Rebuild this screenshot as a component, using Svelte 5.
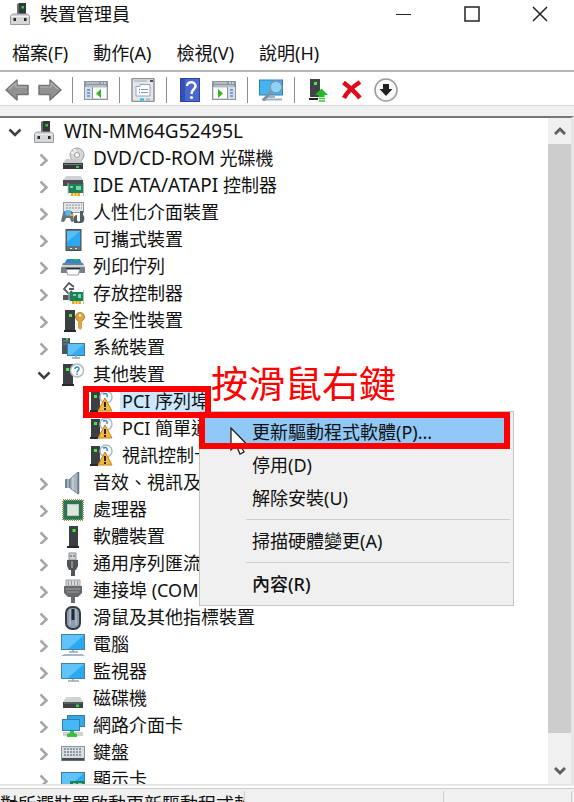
<script>
  const menus = ['檔案(F)', '動作(A)', '檢視(V)', '說明(H)'];

  const toolGroups = [
    [
      { icon: 'back', label: '上一頁' },
      { icon: 'forward', label: '下一頁' },
    ],
    [{ icon: 'panel-left', label: '顯示/隱藏主控台樹狀目錄' }],
    [{ icon: 'properties', label: '內容' }],
    [
      { icon: 'help', label: '說明' },
      { icon: 'panel-right', label: '顯示/隱藏執行窗格' },
    ],
    [{ icon: 'scan', label: '掃描硬體變更' }],
    [
      { icon: 'update', label: '更新驅動程式軟體' },
      { icon: 'remove', label: '解除安裝' },
      { icon: 'disable', label: '停用' },
    ],
  ];

  // lead is the Latin part of a device name, set slightly larger than the rest
  const devices = [
    { level: 0, icon: 'server', lead: 'WIN-MM64G52495L', open: true },
    { level: 1, icon: 'dvd', lead: 'DVD/CD-ROM', name: '光碟機' },
    { level: 1, icon: 'ide', lead: 'IDE ATA/ATAPI', name: '控制器' },
    { level: 1, icon: 'hid', name: '人性化介面裝置' },
    { level: 1, icon: 'portable', name: '可攜式裝置' },
    { level: 1, icon: 'printer', name: '列印佇列' },
    { level: 1, icon: 'storage', name: '存放控制器' },
    { level: 1, icon: 'security', name: '安全性裝置' },
    { level: 1, icon: 'system', name: '系統裝置' },
    { level: 1, icon: 'other', name: '其他裝置', open: true },
    { level: 2, icon: 'warning', name: 'PCI 序列埠', selected: true },
    { level: 2, icon: 'warning', name: 'PCI 簡單通訊控制器' },
    { level: 2, icon: 'warning', name: '視訊控制卡' },
    { level: 1, icon: 'sound', name: '音效、視訊及遊戲控制器' },
    { level: 1, icon: 'cpu', name: '處理器' },
    { level: 1, icon: 'software', name: '軟體裝置' },
    { level: 1, icon: 'usb', name: '通用序列匯流排控制器' },
    { level: 1, icon: 'port', name: '連接埠 (COM 和 LPT)' },
    { level: 1, icon: 'mouse', name: '滑鼠及其他指標裝置' },
    { level: 1, icon: 'computer', name: '電腦' },
    { level: 1, icon: 'monitor', name: '監視器' },
    { level: 1, icon: 'disk', name: '磁碟機' },
    { level: 1, icon: 'network', name: '網路介面卡' },
    { level: 1, icon: 'keyboard', name: '鍵盤' },
    { level: 1, icon: 'display', name: '顯示卡' },
  ];

  const contextGroups = [
    ['更新驅動程式軟體(P)...', '停用(D)', '解除安裝(U)'],
    ['掃描硬體變更(A)'],
    ['內容(R)'],
  ];
</script>

{#snippet icon(name)}
  <svg class="icon" width="24" height="24" viewBox="0 0 24 24" fill="none" aria-hidden="true">
    {#if name === 'back' || name === 'forward'}
      <path
        d={name === 'back'
          ? 'M1 12L12 2V7.500H23V16.500H12V22Z'
          : 'M23 12L12 2V7.500H1V16.500H12V22Z'}
        fill="#929292" stroke="#747474" stroke-width="1.500" stroke-linejoin="round"
      />
      <path d={name === 'back' ? 'M3.500 11.500L11 5V9H22' : 'M20.500 11.500L13 5V9H2'} stroke="#b4b4b4" stroke-width="1.200" />
    {:else if name === 'panel-left' || name === 'panel-right'}
      <rect x=".5" y="3.500" width="23" height="18" fill="#d9dde1" stroke="#8c96a2" />
      <path d="M0 3H24V9H0Z" fill="#8c96a2" />
      <path d="M2 5H15M2 8H22" stroke="#dfe4ea" />
      <path d="M17 5H19M20 5H22" stroke="#fff" />
      {#if name === 'panel-left'}
        <path d="M9 10H22V20H9Z" fill="#fff" />
        <path d="M8.500 9V21" stroke="#8c96a2" />
        <path d="M3 12H6M3 15H6M3 18H6" stroke="#4e8edb" stroke-width="1.500" />
        <path d="M12 15.500L17 11V20Z" fill="#36b51f" />
      {:else}
        <path d="M2 10H15V20H2Z" fill="#fff" />
        <path d="M15.500 9V21" stroke="#8c96a2" />
        <path d="M18 12H21M18 15H21M18 18H21" stroke="#4e8edb" stroke-width="1.500" />
        <path d="M11 15.500L6 11V20Z" fill="#36b51f" />
      {/if}
    {:else if name === 'properties'}
      <rect x="1" y=".5" width="22" height="23" rx="1" fill="#e4e7ea" stroke="#8b9299" stroke-width="1.500" />
      <path d="M3 3H16" stroke="#9ba7b2" />
      <path d="M19 2H22V4H19Z" fill="#4d5359" />
      <path d="M5 8.500H9V6.500H19V18H5Z" fill="#fff" stroke="#9aa6b2" />
      <path d="M8 11.500H9M8 14.500H9" stroke="#248fdd" stroke-width="1.500" />
      <path d="M10 11.500H17M10 14.500H17" stroke="#8b9299" />
      <path d="M9 21.500H13" stroke="#18bdf0" stroke-width="2" />
      <path d="M15 21.500H19" stroke="#aeb8c0" stroke-width="2" />
    {:else if name === 'help'}
      <rect x="2.500" y=".5" width="19" height="23" fill="#4a67cf" stroke="#2746a8" />
      <path d="M3 1H7V23H3Z" fill="#3450b4" />
      <path d="M9 8C9 2.800 17.500 3 17.500 8C17.500 11 13.500 11.500 13.500 16" stroke="#fff" stroke-width="2.500" />
      <circle cx="13.500" cy="19.500" r="1.600" fill="#fff" />
    {:else if name === 'scan'}
      <rect x=".5" y="2" width="23" height="15" fill="#46b4ee" stroke="#2b7fb5" />
      <path d="M8 17H16V20H8Z" fill="#9fb4c4" />
      <path d="M3 21.500H23" stroke="#9db0bf" stroke-width="2" />
      <path d="M12 14L5 21.500" stroke="#7b93a6" stroke-width="3" stroke-linecap="round" />
      <circle cx="17" cy="9" r="6" fill="#8fd2f8" stroke="#7898ad" stroke-width="1.500" />
    {:else if name === 'update'}
      <path d="M4 1H14V19H4Z" fill="#3f4347" />
      <path d="M3 21H12" stroke="#222" stroke-width="2" />
      <path d="M8 4H11V7H8Z" fill="#48f03a" />
      <path d="M9 17L15.500 10.500L22 17H18.500V19H12.500V17Z" fill="#27b72c" />
      <path d="M13 20.500H19M13 23H19" stroke="#3cc83d" stroke-width="1.500" />
    {:else if name === 'remove'}
      <path d="M3.500 4.500C8 8 15 14 20 20M20 4C14 8 7 14 4 20" stroke="#e00b19" stroke-width="4.500" />
    {:else if name === 'disable'}
      <circle cx="12" cy="12" r="11" fill="#fafafa" stroke="#9b9b9b" stroke-width="1.500" />
      <path d="M9 6H15V11H18.500L12 18L5.500 11H9Z" fill="#222" />
    {:else if name === 'server'}
      <path d="M11 1H18V14H11Z" fill="#34383b" />
      <path d="M9 2L11 1V14H9Z" fill="#686c70" />
      <path d="M13.500 4H16V6.500H13.500Z" fill="#25d62b" />
      <path d="M4.500 12H19.500L21.500 14V22.500H2.500V14Z" fill="#d4d6d8" stroke="#999da1" />
      <path d="M3 14.500H21" stroke="#efefef" />
      <path d="M5.500 16H8V19H5.500ZM16 16H18.500V19H16Z" fill="#2b2b2b" />
    {:else if name === 'dvd'}
      <circle cx="16" cy="8" r="7" fill="#d5d7d9" stroke="#9da0a3" />
      <path d="M16 8L10 5M16 8L13 2" stroke="#f7f7f7" stroke-width="1.500" />
      <circle cx="16" cy="8" r="2.500" fill="#fff" stroke="#999" />
      <path d="M5 12H19L22 16H2Z" fill="#c7c9cb" />
      <path d="M2 16H22V22H2Z" fill="#34383b" />
      <path d="M3 17.500H21" stroke="#777" />
      <path d="M15 19H18V21H15Z" fill="#2adb31" />
    {:else if name === 'ide'}
      <path d="M5 2H20L22 6H2Z" fill="#d1d3d5" />
      <path d="M2 6H22V12H2Z" fill="#4a4e52" />
      <path d="M7 10H22V19H7Z" fill="#198258" />
      <path d="M9 12H12V14H9ZM15 12H20V16H15Z" fill="#7fd1a5" />
      <path d="M7 9V20M22.500 9V22" stroke="#b9c1bd" />
      <path d="M10 19H19V22H10Z" fill="#eda51d" />
      <path d="M13 19V22M16 19V22" stroke="#fff2b8" />
    {:else if name === 'hid'}
      <rect x="2.500" y="1.500" width="20" height="10" fill="#e3e5e7" stroke="#979ca1" />
      <path d="M5 4H21M5 7H21" stroke="#8d9398" stroke-dasharray="2 1" />
      <path d="M2 12Q3 9 7 10Q11 9 12 12L13 20Q10 23 9 17H5Q3 23 0 20Z" fill="#68737d" />
      <circle cx="7" cy="12" r="3" fill="#49bbf3" />
      <path d="M9 13H12V15H9Z" fill="#f6a12c" />
      <path d="M13 22V17Q13 14 16 14V19Q17 22 19 20V10H22V14Q24 15 23 20L21 22Z" fill="#515b64" />
    {:else if name === 'portable'}
      <rect x="5" y="1.500" width="15" height="21" fill="#667079" stroke="#47505a" />
      <path d="M6 3H19V18H6Z" fill="#2ba9f6" />
      <path d="M6 3H19L6 14Z" fill="#59bff9" />
      <path d="M9 20.500H11M14 20.500H16" stroke="#dce4e9" />
    {:else if name === 'printer'}
      <path d="M6 4H19L21 9H3Z" fill="#2389da" />
      <path d="M13 4H17V6H13Z" fill="#29ba49" />
      <path d="M2 8H22L24 13V18H0V13Z" fill="#788087" />
      <path d="M1 11H23" stroke="#cfd3d6" stroke-width="2" />
      <path d="M5 13H19V16H5Z" fill="#252a2e" />
      <path d="M5.500 14.500H18.500L17.500 20H6.500Z" fill="#fff" stroke="#9aa1a6" />
    {:else if name === 'storage'}
      <path d="M13 5L8 1L3 7L8 12L11 9M8 7H13" stroke="#555b60" stroke-width="1.800" />
      <path d="M2 13H12V18H2Z" fill="#53585d" />
      <path d="M9 10H22V19H9Z" fill="#198258" />
      <path d="M12 12H15V14H12ZM17 12H20V16H17Z" fill="#83d1a7" />
      <path d="M8 10V20M22.500 8V22" stroke="#b9c1bd" />
      <path d="M11 19H20V22H11Z" fill="#eda51d" />
      <path d="M14 19V22M17 19V22" stroke="#fff2b8" />
    {:else if name === 'security' || name === 'software'}
      <path d={name === 'security' ? 'M4 1H14V21H4Z' : 'M8 1H17V21H8Z'} fill="#3b3f43" />
      <path d={name === 'security' ? 'M3 22H15' : 'M6 22H18'} stroke="#24282a" stroke-width="2" />
      <path d={name === 'security' ? 'M8 5H11V8H8Z' : 'M11.500 4H14.500V7H11.500Z'} fill="#48e93c" />
      {#if name === 'security'}
        <circle cx="19" cy="8" r="4.500" fill="#d9a542" stroke="#b88730" />
        <path d="M17 11H21V19L19.500 21L17 19Z" fill="#d9a542" />
        <circle cx="19" cy="6.500" r="1.200" fill="#fff5d2" />
      {/if}
    {:else if name === 'system'}
      <path d="M1 2H9V18H1Z" fill="#4b555d" />
      <path d="M2 5H8M2 8H8" stroke="#7d8991" />
      <path d="M5 2H7V4H5Z" fill="#35cf52" />
      <rect x="6.500" y="7.500" width="17" height="12" fill="#36acf2" stroke="#397da5" />
      <path d="M7 8H23L10 19H7Z" fill="#61c2fa" />
      <path d="M15 19V22M11 22H19" stroke="#90a6b5" stroke-width="1.500" />
    {:else if name === 'other'}
      <path d="M2 1H12V21H2Z" fill="#3b3f43" />
      <path d="M1 22H13" stroke="#25292b" stroke-width="2" />
      <path d="M5 5H8V8H5Z" fill="#48e93c" />
      <circle cx="16" cy="7.500" r="6.500" fill="#fff" stroke="#b3b9bd" stroke-width="1.500" />
      <path d="M14 6C14 3 18.500 3.500 18 6C18 7.500 16 7.500 16 9.500M16 10.500V12" stroke="#298bc2" stroke-width="1.500" />
    {:else if name === 'warning'}
      <path d="M1 2H10V20H1Z" fill="#3b3f43" />
      <path d="M0 21H8" stroke="#25292b" stroke-width="2" />
      <path d="M4 5H7V8H4Z" fill="#48e93c" />
      <circle cx="16" cy="7" r="6" fill="#f7fbff" stroke="#b3b9bd" stroke-width="1.500" />
      <path d="M13 4Q18 2 17 7" stroke="#298bc2" stroke-width="1.500" />
      <path d="M15 8L22 21H8Z" fill="#f6b940" stroke="#c48416" stroke-linejoin="round" />
      <path d="M15 12V17M15 18V20" stroke="#272015" stroke-width="2" />
    {:else if name === 'sound'}
      <path d="M4 8H9V17H4Z" fill="#718697" />
      <path d="M9 8L17 1V23L9 17Z" fill="#a9b4bc" stroke="#748490" />
      <path d="M7 8V17M12 6V19" stroke="#d6dee3" />
      <path d="M17.500 1V23" stroke="#667580" stroke-width="1.500" />
    {:else if name === 'cpu'}
      <rect x="2" y="2" width="20" height="20" fill="#2a7455" stroke="#9b9c58" stroke-width="2" stroke-dasharray="1 1" />
      <rect x="3" y="3" width="18" height="18" fill="#2a7455" />
      <rect x="6.500" y="6.500" width="11" height="11" fill="#e0e4df" stroke="#b9c9bf" />
    {:else if name === 'usb'}
      <path d="M8 1H15V8H8Z" fill="#d2d4d5" stroke="#858a8e" />
      <path d="M10 3V5M13 3V5" stroke="#444" />
      <path d="M6 8H17V14L15 18H14V24H10V18H8L6 14Z" fill="#515558" />
      <path d="M11 9V16" stroke="#858a8e" stroke-width="2" />
    {:else if name === 'port'}
      <path d="M5 1H19V7H5Z" fill="#d9dbdc" stroke="#9b9fa2" />
      <path d="M7 3H18M7 5H18" stroke="#505355" stroke-dasharray="1 2" />
      <path d="M3 7H21V14L17 18H14V24H10V18H7L3 14Z" fill="#65696c" />
      <path d="M5 10H19M6 13H18" stroke="#a2a5a7" />
    {:else if name === 'mouse'}
      <rect x="5" y="1" width="14" height="22" rx="6" fill="#899bac" stroke="#343c44" stroke-width="2" />
      <path d="M9 3V19M15 3V19" stroke="#c0cbd4" />
      <path d="M12 3V14" stroke="#222b33" stroke-width="3" />
    {:else if name === 'computer' || name === 'monitor'}
      <rect x=".5" y={name === 'computer' ? 1.5 : 3.5} width="23" height="15" fill="#2aa8f2" stroke="#44819f" />
      <path d={name === 'computer' ? 'M1 2H23L7 16H1Z' : 'M1 4H23L7 18H1Z'} fill="#61c3fa" />
      <path d={name === 'computer' ? 'M12 17V19M8 19H17' : 'M12 19V21M7 21H18'} stroke="#93a9b7" stroke-width="1.500" />
      {#if name === 'computer'}
        <path d="M3 21H21L24 23H0Z" fill="#a3b7c6" />
      {/if}
    {:else if name === 'disk'}
      <path d="M5 10H19L22 15H2Z" fill="#d0d2d3" />
      <path d="M2 15H22V21H2Z" fill="#3d4144" />
      <path d="M3 16H21" stroke="#73787b" />
      <path d="M15 17.500H18V20H15Z" fill="#2bd839" />
    {:else if name === 'network'}
      <rect x="6.500" y="1.500" width="17" height="11" fill="#33a9ec" stroke="#387da3" />
      <rect x="1.500" y="5.500" width="17" height="11" fill="#45b8f6" stroke="#387da3" />
      <path d="M2 20H22" stroke="#cdd2d4" stroke-width="4" />
      <path d="M9 17H13V19L16 20V23H6V20L9 19Z" fill="#37bf42" />
    {:else if name === 'keyboard'}
      <rect x=".5" y="5.500" width="23" height="14" fill="#d8dde1" stroke="#89939b" />
      <path d="M3 8H21M3 11H21M3 14H21" stroke="#79838b" stroke-width="1.500" stroke-dasharray="2 1" />
      <path d="M1 17H23V19.500H1Z" fill="#454d54" />
    {:else if name === 'display'}
      <rect x=".5" y="4.500" width="23" height="15" fill="#2fa9ed" stroke="#3d7c9f" />
      <path d="M1 5H23L7 19H1Z" fill="#5fc2f8" />
      <path d="M9 13H23V20H9Z" fill="#198258" />
      <path d="M12 15H15V17H12ZM17 15H21V19H17Z" fill="#8ad1a8" />
    {/if}
  </svg>
{/snippet}

<div class="window">
  <header class="titlebar">
    {@render icon('server')}
    <h1>裝置管理員</h1>
    <div class="window-buttons">
      <button aria-label="最小化">
        <svg width="16" height="16" viewBox="0 0 16 16"><path d="M0 8.500H15" stroke="#222" /></svg>
      </button>
      <button aria-label="最大化">
        <svg width="16" height="16" viewBox="0 0 16 16" fill="none"><rect x="1" y="1" width="14" height="14" stroke="#222" stroke-width="1.500" /></svg>
      </button>
      <button aria-label="關閉">
        <svg width="16" height="16" viewBox="0 0 16 16"><path d="M1 1L15 15M15 1L1 15" stroke="#222" stroke-width="1.500" /></svg>
      </button>
    </div>
  </header>

  <nav class="menubar">
    {#each menus as menu (menu)}
      <button>{menu}</button>
    {/each}
  </nav>

  <div class="toolbar" role="toolbar" aria-label="工具列">
    {#each toolGroups as group, i (i)}
      <div class="tool-group">
        {#each group as tool (tool.icon)}
          <button aria-label={tool.label}>{@render icon(tool.icon)}</button>
        {/each}
      </div>
    {/each}
  </div>

  <main class="content">
    <ul class="tree" role="tree">
      {#each devices as device, i (i)}
        <li
          class="row level-{device.level}"
          role="treeitem"
          aria-level={device.level + 1}
          aria-selected={!!device.selected}
        >
          {#if device.level < 2}
            <button class="toggle" class:open={device.open} aria-label={device.open ? '摺疊' : '展開'}>
              <svg width="14" height="14" viewBox="0 0 14 14" fill="none">
                <path d={device.open ? 'M1.500 4.500L7 10L12.500 4.500' : 'M3.500 2.500L9.500 8.500L3.500 14'} stroke="currentColor" stroke-width="2.500" />
              </svg>
            </button>
          {:else}
            <span class="toggle"></span>
          {/if}
          {@render icon(device.icon)}
          <span class="name">
            {#if device.lead}<span class="lead">{device.lead}</span>{/if}
            {device.name ?? ''}
          </span>
        </li>
      {/each}
    </ul>

    <div class="scrollbar">
      <button aria-label="向上捲動">
        <svg width="12" height="10" viewBox="0 0 12 10" fill="none"><path d="M1 8L6 3L11 8" stroke="#606060" stroke-width="3" /></svg>
      </button>
      <div class="track"><div class="thumb"></div></div>
      <button aria-label="向下捲動">
        <svg width="12" height="10" viewBox="0 0 12 10" fill="none"><path d="M1 2L6 7L11 2" stroke="#606060" stroke-width="3" /></svg>
      </button>
    </div>
  </main>

  <footer class="statusbar">
    <span class="status-text">對所選裝置啟動更新驅動程式軟體精靈。</span>
    <span></span>
    <span></span>
  </footer>

  <div class="context-menu" role="menu">
    {#each contextGroups as group, i (i)}
      {#if i > 0}
        <hr />
      {/if}
      {#each group as item (item)}
        <button role="menuitem" class:active={item.endsWith('...')} class:default={item === '內容(R)'}>{item}</button>
      {/each}
    {/each}
  </div>

  <svg class="pointer" width="18" height="29" viewBox="0 0 18 29" aria-hidden="true">
    <path d="M1 1V23L6 18L10 27L14 25L10 17H16.500Z" fill="#fff" stroke="#222" stroke-width="1.300" />
  </svg>

  <!-- Tutorial callouts -->
  <div class="callout device-callout"></div>
  <div class="callout menu-callout"></div>
  <p class="hint">按滑鼠右鍵</p>
</div>

<style>
  :global(body) {
    background: #fff;
  }

  .window {
    position: relative;
    display: flex;
    flex-direction: column;
    height: 100vh;
    overflow: hidden;
    background: #f0f0f0;
    color: #111;
    font-family: "Noto Sans", "Noto Sans CJK TC", sans-serif;
    font-size: 18px;
    line-height: 27px;
  }

  button {
    padding: 0;
    border: 0;
    background: none;
    color: inherit;
    font: inherit;
  }

  svg {
    display: block;
    flex: none;
  }

  .titlebar {
    display: flex;
    align-items: center;
    flex: none;
    gap: 8px;
    height: 28px;
    padding-left: 8px;
    background: #fff;
  }

  h1 {
    margin: 0;
    font-size: 18px;
    font-weight: 400;
  }

  .window-buttons {
    display: flex;
    margin-left: auto;
  }

  .window-buttons button {
    display: grid;
    place-items: center;
    width: 68px;
    height: 28px;
  }

  .menubar {
    display: flex;
    flex: none;
    gap: 25px;
    padding: 12px 12px 3px;
    background: #fff;
    border-bottom: 2px solid #b4b4b4;
  }

  .toolbar {
    display: flex;
    flex: none;
    height: 31px;
    padding-top: 2px;
    background: #fff;
    border-bottom: 1px solid #d8d8d8;
  }

  .tool-group {
    display: flex;
    align-items: center;
  }

  .tool-group + .tool-group::before {
    content: "";
    width: 1px;
    height: 26px;
    margin: 0 6px;
    background: #8f8f8f;
  }

  .tool-group button {
    display: grid;
    place-items: center;
    width: 34px;
    height: 30px;
  }

  .tool-group:first-child button {
    width: 33px;
  }

  .content {
    display: flex;
    flex: 1;
    min-height: 0;
    margin-top: 10px;
    border-top: 2px solid #777;
    border-right: 3px solid #e6e6e6;
    border-bottom: 1px solid #e3e3e3;
    background: #fff;
  }

  .tree {
    flex: 1;
    min-width: 0;
    margin: 0;
    padding: 0;
    overflow: hidden;
    list-style: none;
  }

  .row {
    display: flex;
    align-items: center;
    height: 27px;
    white-space: nowrap;
  }

  .level-1 {
    padding-left: 29px;
  }

  .level-2 {
    padding-left: 58px;
  }

  .toggle {
    display: grid;
    flex: none;
    place-items: center;
    width: 30px;
    height: 27px;
    margin-right: 2px;
    color: #a6a6a6;
  }

  .toggle.open {
    color: #404040;
  }

  .name {
    margin-left: 6px;
    padding: 0 2px;
  }

  .row[aria-selected="true"] .name {
    background: #cce8ff;
  }

  .lead {
    font-size: 19px;
  }

  .scrollbar {
    display: flex;
    flex-direction: column;
    flex: none;
    width: 23px;
    background: #f0f0f0;
  }

  .scrollbar button {
    display: grid;
    place-items: center;
    height: 26px;
  }

  .track {
    display: flex;
    flex: 1;
    flex-direction: column;
  }

  .thumb {
    height: 96%;
    background: #cdcdcd;
  }

  .statusbar {
    display: grid;
    grid-template-columns: 245px 199px 1fr;
    flex: none;
    height: 13px;
    margin-top: 3px;
    padding-right: 2px;
    border-top: 1px solid #ccc;
    box-shadow: 0 -2px #fff;
    overflow: hidden;
  }

  .statusbar span {
    height: 27px;
    margin-top: 2px;
    border-right: 1px solid #ccc;
    overflow: hidden;
    white-space: nowrap;
  }

  .context-menu {
    position: absolute;
    top: 411px;
    left: 199px;
    display: flex;
    flex-direction: column;
    width: 307px;
    padding: 4px 3px;
    background: #f0f0f0;
    border: 1px solid #c4c4c4;
  }

  .context-menu button {
    height: 33px;
    padding-left: 49px;
    text-align: left;
    white-space: nowrap;
  }

  .context-menu button.active {
    background: #90c8f6;
  }

  .context-menu button.default {
    font-weight: 500;
  }

  .context-menu hr {
    width: 264px;
    height: 1px;
    margin: 4px 0 5px auto;
    border: 0;
    background: #ccc;
  }

  .callout {
    position: absolute;
    box-sizing: border-box;
    border: 6px solid #f00;
  }

  .device-callout {
    top: 386px;
    left: 83px;
    width: 128px;
    height: 32px;
  }

  .menu-callout {
    top: 412px;
    left: 199px;
    width: 311px;
    height: 37px;
  }

  .hint {
    position: absolute;
    top: 361px;
    left: 211px;
    margin: 0;
    color: #f00;
    font-size: 37px;
    line-height: 46px;
  }

  .pointer {
    position: absolute;
    top: 427px;
    left: 230px;
  }
</style>
